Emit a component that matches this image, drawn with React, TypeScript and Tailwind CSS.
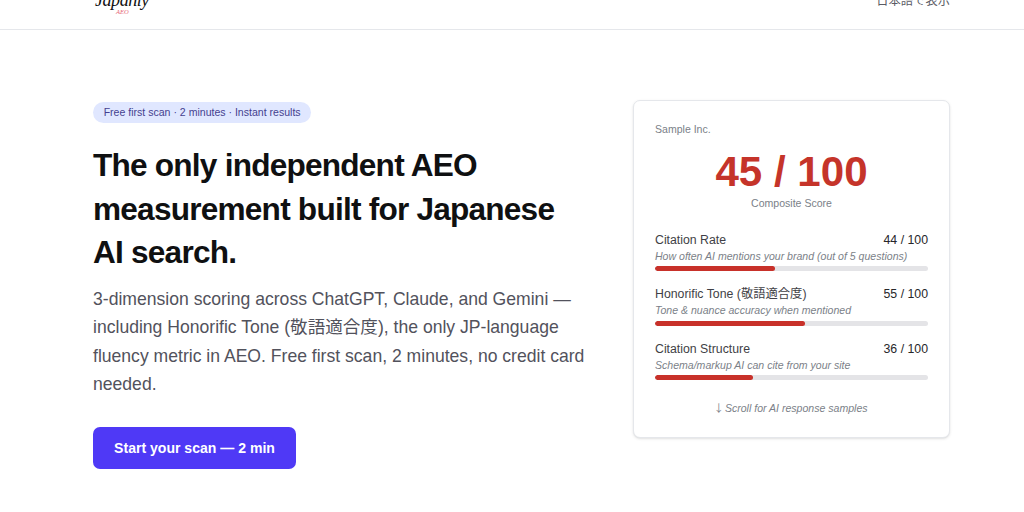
const metrics = [
  { label: 'Citation Rate', hint: 'How often AI mentions your brand (out of 5 questions)', score: 44 },
  { label: 'Honorific Tone (敬語適合度)', hint: 'Tone & nuance accuracy when mentioned', score: 55 },
  { label: 'Citation Structure', hint: 'Schema/markup AI can cite from your site', score: 36 },
]

function Header() {
  return (
    <header className="flex h-[30px] items-end justify-between overflow-hidden border-b border-gray-200 pr-[74px] pl-[93px]">
      <div className="relative h-[30px] w-[60px] font-['Liberation_Serif','Noto_Serif',serif] italic">
        <span className="absolute -top-[8px] left-[2px] text-[18px] leading-[18px] tracking-[-0.45px] text-[#111111]">Japanly</span>
        <span className="absolute top-[9px] left-[23px] text-[6.5px] leading-[8px] text-[#e65f74]">AEO</span>
      </div>
      <a href="#ja" className="mb-[19px] text-[12.3px] leading-[18px] text-[#5b5b64]">日本語で表示</a>
    </header>
  )
}

function Hero() {
  return (
    <section className="flex w-[508px] flex-col items-start">
      <span className="mt-[1px] h-[21px] rounded-full bg-[#e0e7ff] px-[10.67px] text-[10.55px] leading-[20px] text-[#453f8f]">
        Free first scan · 2 minutes · Instant results
      </span>
      <h1 className="mt-[21px] text-[31.6px] leading-[43.5px] font-bold tracking-[-0.78px] text-[#0f1011]">
        The only independent AEO
        <br />
        measurement built for Japanese
        <br />
        AI search.
      </h1>
      <p className="mt-[10px] text-[17.58px] leading-[28.5px] text-[#52525c]">
        3-dimension scoring across ChatGPT, Claude, and Gemini —
        <br />
        including Honorific Tone (敬語適合度), the only JP-language
        <br />
        fluency metric in AEO. Free first scan, 2 minutes, no credit card
        <br />
        needed.
      </p>
      <button className="mt-[28px] h-[42px] w-[203px] rounded-[7px] bg-[#4f39f6] pt-[2px] text-[14.05px] font-bold text-white">
        Start your scan — 2 min
      </button>
    </section>
  )
}

function ScoreCard() {
  return (
    <aside className="-mt-[1px] h-[338px] w-[317px] rounded-[7px] border border-gray-200 bg-white px-[21px] pt-[20px] shadow-sm">
      <p className="text-[10.55px] leading-[16px] text-[#7b7f88]">Sample Inc.</p>
      <p className="mt-[13px] text-center text-[42.1px] leading-[43px] font-bold text-[#c5342a]">45 / 100</p>
      <p className="mt-[2px] text-center text-[10.55px] leading-[16px] text-[#7b7f88]">Composite Score</p>
      <div className="mt-[20px] flex flex-col gap-[14.4px]">
        {metrics.map((metric) => (
          <div key={metric.label} className="h-[40px]">
            <div className="flex h-[18px] justify-between text-[12.3px] leading-[18px]">
              <span className="text-[#3f3f46]">{metric.label}</span>
              <span className="text-[#27272a]">{metric.score} / 100</span>
            </div>
            <p className="h-[14px] text-[10.55px] leading-[14px] text-[#7b7f88] italic">{metric.hint}</p>
            <div className="mt-[3.2px] h-[5px] overflow-hidden rounded-full bg-[#e4e4e7]">
              <div className="h-full rounded-full bg-[#c8312a]" style={{ width: `${metric.score}%` }} />
            </div>
          </div>
        ))}
      </div>
      <p className="mt-[20px] text-center text-[10.55px] leading-[16px] text-[#7b7f88] italic">
        <span className="font-['Noto_Sans_CJK_JP',sans-serif] -mx-[2px] leading-none not-italic">↓</span> Scroll for AI response samples
      </p>
    </aside>
  )
}

export default function App() {
  return (
    <div className="h-[512px] overflow-hidden bg-white font-['Liberation_Sans','Noto_Sans_CJK_JP',sans-serif]">
      <Header />
      <main className="flex items-start justify-between pt-[71px] pr-[74px] pl-[93px]">
        <Hero />
        <ScoreCard />
      </main>
    </div>
  )
}
